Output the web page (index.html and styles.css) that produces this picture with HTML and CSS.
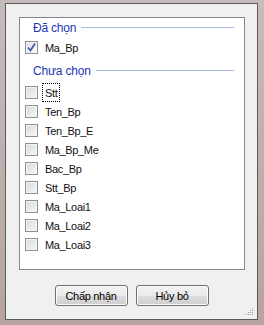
FILE: index.html
```html
<!DOCTYPE html>
<html>
<head>
    <meta charset="utf-8">
    <title>Chọn cột</title>
    <link rel="stylesheet" href="styles.css">
</head>
<body>
    <div class="window">
        <div class="dialog">
            <div class="list-panel">
                <div class="group-header">
                    <span class="group-title">Đã chọn</span>
                    <span class="group-line"></span>
                </div>
                <div class="item">
                    <span class="check checked">
                        <svg width="11" height="11" viewBox="0 0 11 11"><path d="M2 5.5 L4.5 8.5 L9 1.5" fill="none" stroke="#3f5c9c" stroke-width="1.8"/></svg>
                    </span>
                    <span class="item-label">Ma_Bp</span>
                </div>

                <div class="group-header second">
                    <span class="group-title">Chưa chọn</span>
                    <span class="group-line"></span>
                </div>
                <div class="items">
                    <div class="item"><span class="check"></span><span class="item-label focused">Stt</span></div>
                    <div class="item"><span class="check"></span><span class="item-label">Ten_Bp</span></div>
                    <div class="item"><span class="check"></span><span class="item-label">Ten_Bp_E</span></div>
                    <div class="item"><span class="check"></span><span class="item-label">Ma_Bp_Me</span></div>
                    <div class="item"><span class="check"></span><span class="item-label">Bac_Bp</span></div>
                    <div class="item"><span class="check"></span><span class="item-label">Stt_Bp</span></div>
                    <div class="item"><span class="check"></span><span class="item-label">Ma_Loai1</span></div>
                    <div class="item"><span class="check"></span><span class="item-label">Ma_Loai2</span></div>
                    <div class="item"><span class="check"></span><span class="item-label">Ma_Loai3</span></div>
                </div>
            </div>

            <div class="button-row">
                <button class="btn">Chấp nhận</button>
                <button class="btn">Hủy bỏ</button>
            </div>

            <svg class="grip" width="8" height="8" viewBox="0 0 8 8">
                <rect x="6" y="0" width="1" height="1" fill="#a0a0a0"/>
                <rect x="4" y="2" width="1" height="1" fill="#a0a0a0"/>
                <rect x="6" y="2" width="1" height="1" fill="#a0a0a0"/>
                <rect x="2" y="4" width="1" height="1" fill="#a0a0a0"/>
                <rect x="4" y="4" width="1" height="1" fill="#a0a0a0"/>
                <rect x="6" y="4" width="1" height="1" fill="#a0a0a0"/>
                <rect x="0" y="6" width="1" height="1" fill="#a0a0a0"/>
                <rect x="2" y="6" width="1" height="1" fill="#a0a0a0"/>
                <rect x="4" y="6" width="1" height="1" fill="#a0a0a0"/>
                <rect x="6" y="6" width="1" height="1" fill="#a0a0a0"/>
            </svg>
        </div>
    </div>
</body>
</html>
```

FILE: styles.css
```css
body {
    margin: 0;
    font-family: 'Liberation Sans', Arial, sans-serif;
    font-size: 11px;
    color: #000;
}
.window {
    width: 264px;
    height: 325px;
    box-sizing: border-box;
    padding: 3px 6px 5px 5px;
    background: linear-gradient(180deg, #c6bcbb, #b6a3a1);
}
.dialog {
    position: relative;
    height: 100%;
    box-sizing: border-box;
    border: 1px solid #5e5a5a;
    background-color: #f0f0f0;
    padding: 13px 0 0 13px;
}
.list-panel {
    width: 226px;
    height: 253px;
    box-sizing: border-box;
    border: 1px solid #828790;
    background-color: #fff;
    padding-left: 5px;
}

/* group headers */
.group-header {
    display: flex;
    align-items: center;
    height: 20px;
    padding-left: 8px;
    margin-right: 10px;
}
.group-header.second {
    margin-top: 4px;
}
.group-title {
    font-size: 12px;
    color: #1a36b8;
    letter-spacing: -0.2px;
}
.group-line {
    flex: 1;
    height: 1px;
    margin-left: 5px;
    margin-top: -1px;
    background-color: #a9b8e2;
}

/* rows */
.items {
    margin-top: 2px;
}
.item {
    display: flex;
    align-items: center;
    height: 19px;
}
.check {
    width: 13px;
    height: 13px;
    box-sizing: border-box;
    border: 1px solid #8e8f8f;
    background: linear-gradient(135deg, #d8d8d8, #f8f8f8);
    box-shadow: inset 0 0 0 1px #f4f4f4;
    display: flex;
    align-items: center;
    justify-content: center;
}
.check.checked {
    background: linear-gradient(135deg, #dde3ef, #fafbfd);
}
.item-label {
    margin-left: 4px;
    padding: 1px 2px 0 2px;
    line-height: 16px;
    letter-spacing: -0.35px;
    color: #111;
    border: 1px solid transparent;
}
.item-label.focused {
    border: 1px dotted #000;
}

/* buttons */
.button-row {
    display: flex;
    justify-content: center;
    gap: 8px;
    margin: 15px 0 0 -13px;
}
.btn {
    width: 73px;
    height: 21px;
    padding: 0;
    font-family: 'Liberation Sans', Arial, sans-serif;
    font-size: 11px;
    letter-spacing: -0.3px;
    color: #000;
    border: 1px solid #707070;
    border-radius: 3px;
    background: linear-gradient(180deg, #f2f2f2 0%, #ebebeb 50%, #dddddd 51%, #cfcfcf 100%);
    box-shadow: inset 0 0 0 1px #fbfbfb;
}
.grip {
    position: absolute;
    right: 3px;
    bottom: 3px;
}
```
